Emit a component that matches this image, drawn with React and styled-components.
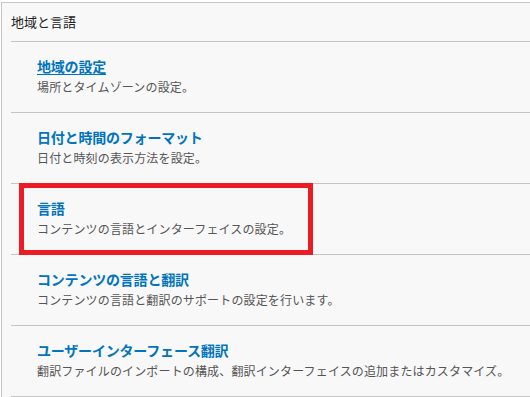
import styled, { createGlobalStyle } from 'styled-components';

const Global = createGlobalStyle`
    body {
        margin: 0;
        background: #fff;
        font-family: "Noto Sans CJK JP", "Noto Sans", sans-serif;
    }
`;

const Panel = styled.section`
    margin: 2px 0 0 1px;
    height: 395px;
    background: #f8f8f8;
    border-top: 1px solid #c8c8c8;
    border-left: 1px solid #c8c8c8;
    padding-left: 9px;
    box-sizing: border-box;
    overflow: hidden;
`;

const Header = styled.h2`
    margin: 0;
    padding: 9px 0;
    font-size: 13px;
    line-height: 20px;
    font-weight: normal;
    color: #222;
    border-bottom: 1px solid #c4c4c4;
`;

const List = styled.ul`
    margin: 0;
    padding: 0;
    list-style: none;
`;

const Item = styled.li`
    position: relative;
    padding: 14px 0 15px 26px;
    border-bottom: 1px solid #c4c4c4;
`;

const Title = styled.a`
    display: block;
    margin-bottom: 1px;
    font-size: 14px;
    line-height: 20px;
    font-weight: bold;
    color: #0074bd;
    letter-spacing: -0.2px;
    text-decoration: ${p => (p.$active ? 'underline' : 'none')};
    text-underline-offset: 2px;
`;

const Desc = styled.div`
    font-size: 12px;
    line-height: 20px;
    letter-spacing: 0.15px;
    color: #555;
`;

const Highlight = styled.div`
    position: absolute;
    top: -1px;
    left: 8px;
    width: 294px;
    height: 72px;
    border: 5px solid #ed1c24;
    box-sizing: border-box;
    pointer-events: none;
`;

const items = [
    { title: '地域の設定', desc: '場所とタイムゾーンの設定。', active: true },
    { title: '日付と時間のフォーマット', desc: '日付と時刻の表示方法を設定。' },
    { title: '言語', desc: 'コンテンツの言語とインターフェイスの設定。', marked: true },
    { title: 'コンテンツの言語と翻訳', desc: 'コンテンツの言語と翻訳のサポートの設定を行います。' },
    { title: 'ユーザーインターフェース翻訳', desc: '翻訳ファイルのインポートの構成、翻訳インターフェイスの追加またはカスタマイズ。' },
];

export default function App() {
    return (
        <>
            <Global />
            <Panel>
                <Header>地域と言語</Header>
                <List>
                    {items.map(it => (
                        <Item key={it.title}>
                            <Title href="#" $active={it.active}>{it.title}</Title>
                            <Desc>{it.desc}</Desc>
                            {it.marked && <Highlight />}
                        </Item>
                    ))}
                </List>
            </Panel>
        </>
    );
}
